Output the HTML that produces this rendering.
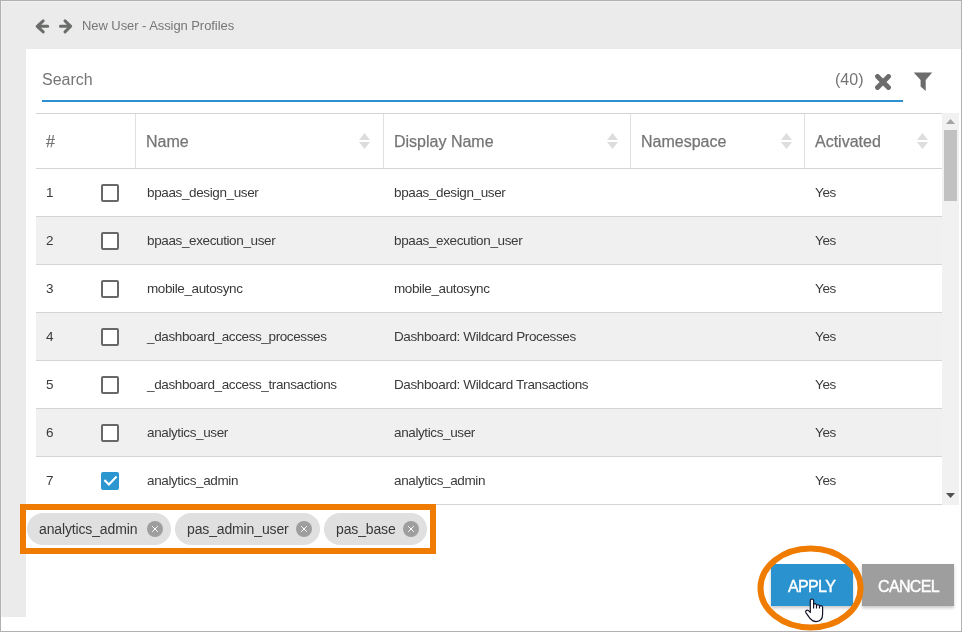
<!DOCTYPE html>
<html><head><meta charset="utf-8">
<style>
*{box-sizing:border-box;margin:0;padding:0}
html,body{width:962px;height:632px;overflow:hidden;background:#fff;font-family:"Liberation Sans",sans-serif}
.abs{position:absolute}
#frame{position:absolute;left:0;top:0;width:962px;height:632px;border:1px solid #b3b0b3;background:#fff}
#topbar{position:absolute;left:1px;top:1px;width:960px;height:48px;background:#ebebeb;border-top:1px solid #f1f1f1}
#leftbar{position:absolute;left:1px;top:1px;width:25px;height:616px;background:#ebebeb;border-left:1px solid #f1f1f1;border-top:1px solid #f1f1f1}
.txt{position:absolute;white-space:nowrap;line-height:1;will-change:transform}
#crumb{left:82px;top:19px;font-size:13px;color:#777;letter-spacing:-0.07px}
#search{left:42px;top:72px;font-size:16px;color:#757575}
#count{left:835px;top:72px;font-size:16px;color:#757575}
#uline{left:42px;top:100px;width:861px;height:2px;background:#2b8fd0}
#thead{left:36px;top:113px;width:906px;height:56px;border-top:1px solid #d4d4d4;border-bottom:1px solid #d4d4d4}
.vsep{position:absolute;top:114px;width:1px;height:54px;background:#e0e0e0}
.hd{-webkit-text-stroke:0.25px #757575;will-change:transform;position:absolute;top:134px;font-size:16px;color:#757575;line-height:1;white-space:nowrap}
.sort{position:absolute;top:133px;width:11px;height:16px}
.row{position:absolute;left:36px;width:906px;height:48px;border-bottom:1px solid #d4d4d4}
.row.alt{background:#f0f0f0}
.cell{will-change:transform;position:absolute;top:17px;font-size:13.5px;color:#3a3a3a;line-height:1;white-space:nowrap;letter-spacing:-0.38px}
.cb{position:absolute;left:65px;top:15px;width:18px;height:18px;border:2px solid #676967;border-radius:2px;background:#fff}
.cbon{position:absolute;left:65px;top:15px;width:18px;height:18px}
#track{left:942px;top:113px;width:17px;height:392px;background:#f1f1f1}
#thumb{left:944px;top:130px;width:13px;height:71px;background:#c1c1c1}
#orange{left:20px;top:504px;width:416px;height:50px;border:6px solid #ef7c00}
.chip{position:absolute;top:513px;height:32px;border-radius:16px;background:#e0e0e0}
.chip span{will-change:transform;position:absolute;left:11.5px;top:9px;font-size:14px;color:#383838;line-height:1;white-space:nowrap;letter-spacing:-0.14px}
.chip svg{position:absolute;top:8px;width:16px;height:16px}
.btn{position:absolute;top:564px;height:42px;color:#fff;font-size:16px;box-shadow:0 2px 3px rgba(0,0,0,.22)}
.btn span{-webkit-text-stroke:0.4px #fff;will-change:transform;position:absolute;top:15px;line-height:1;white-space:nowrap;letter-spacing:-0.65px}
</style></head><body>
<div id="frame"></div>
<div id="topbar"></div>
<div id="leftbar"></div>

<svg class="abs" style="left:30px;top:14.5px" width="50" height="22" viewBox="0 0 50 22"><path d="M13.2 5.9 L7.2 11.3 L13.2 16.9 M8 11.3 H17.7 M35 5.9 L40.7 11.3 L35 16.9 M40 11.3 H30.4" fill="none" stroke="#6b6d6b" stroke-width="3" stroke-linecap="round" stroke-linejoin="round"/></svg>
<div id="crumb" class="txt">New User - Assign Profiles</div>

<div id="search" class="txt">Search</div>
<div id="count" class="txt">(40)</div>
<div id="uline" class="abs"></div>
<svg class="abs" style="left:875px;top:74px" width="16" height="16" viewBox="0 0 16 16"><path d="M2.5 2.5 L13.5 13.5 M13.5 2.5 L2.5 13.5" stroke="#6b6c6b" stroke-width="4.9" stroke-linecap="round"/></svg>
<svg class="abs" style="left:913px;top:72px" width="20" height="20" viewBox="0 0 20 20"><path d="M0.7 0.5 H19.2 L12.7 7.9 V19 L7.6 14.6 V7.9 Z" fill="#6b6c6b"/></svg>

<div id="thead" class="abs"></div>
<div class="vsep" style="left:135px"></div>
<div class="vsep" style="left:383px"></div>
<div class="vsep" style="left:630px"></div>
<div class="vsep" style="left:804px"></div>
<div class="hd" style="left:46px">#</div>
<div class="hd" style="left:146px">Name</div>
<div class="hd" style="left:394px">Display Name</div>
<div class="hd" style="left:641px">Namespace</div>
<div class="hd" style="left:815px">Activated</div>
<svg class="sort" style="left:359px" viewBox="0 0 11 16"><path d="M5.5 0 L11 7 H0Z M0 9 H11 L5.5 16Z" fill="#ddd"/></svg>
<svg class="sort" style="left:607px" viewBox="0 0 11 16"><path d="M5.5 0 L11 7 H0Z M0 9 H11 L5.5 16Z" fill="#ddd"/></svg>
<svg class="sort" style="left:781px" viewBox="0 0 11 16"><path d="M5.5 0 L11 7 H0Z M0 9 H11 L5.5 16Z" fill="#ddd"/></svg>
<svg class="sort" style="left:917px" viewBox="0 0 11 16"><path d="M5.5 0 L11 7 H0Z M0 9 H11 L5.5 16Z" fill="#ddd"/></svg>

<div class="row" style="top:169px"><div class="cell" style="left:10px">1</div><div class="cb"></div><div class="cell" style="left:111px">bpaas_design_user</div><div class="cell" style="left:358px">bpaas_design_user</div><div class="cell" style="left:779px">Yes</div></div>
<div class="row alt" style="top:217px"><div class="cell" style="left:10px">2</div><div class="cb"></div><div class="cell" style="left:111px">bpaas_execution_user</div><div class="cell" style="left:358px">bpaas_execution_user</div><div class="cell" style="left:779px">Yes</div></div>
<div class="row" style="top:265px"><div class="cell" style="left:10px">3</div><div class="cb"></div><div class="cell" style="left:111px">mobile_autosync</div><div class="cell" style="left:358px">mobile_autosync</div><div class="cell" style="left:779px">Yes</div></div>
<div class="row alt" style="top:313px"><div class="cell" style="left:10px">4</div><div class="cb"></div><div class="cell" style="left:111px">_dashboard_access_processes</div><div class="cell" style="left:358px">Dashboard: Wildcard Processes</div><div class="cell" style="left:779px">Yes</div></div>
<div class="row" style="top:361px"><div class="cell" style="left:10px">5</div><div class="cb"></div><div class="cell" style="left:111px">_dashboard_access_transactions</div><div class="cell" style="left:358px">Dashboard: Wildcard Transactions</div><div class="cell" style="left:779px">Yes</div></div>
<div class="row alt" style="top:409px"><div class="cell" style="left:10px">6</div><div class="cb"></div><div class="cell" style="left:111px">analytics_user</div><div class="cell" style="left:358px">analytics_user</div><div class="cell" style="left:779px">Yes</div></div>
<div class="row" style="top:457px"><div class="cell" style="left:10px">7</div><svg class="cbon" viewBox="0 0 18 18"><rect x="0" y="0" width="18" height="18" rx="2" fill="#2b96d0"/><path d="M3.4 8.1 L7.9 12.5 L15.6 4.5" fill="none" stroke="#fff" stroke-width="2.1"/></svg><div class="cell" style="left:111px">analytics_admin</div><div class="cell" style="left:358px">analytics_admin</div><div class="cell" style="left:779px">Yes</div></div>

<div id="track" class="abs"></div>
<div id="thumb" class="abs"></div>
<svg class="abs" style="left:946px;top:119px" width="9" height="6" viewBox="0 0 9 6"><path d="M4.5 0 L9 5 H0Z" fill="#a3a3a3"/></svg>
<svg class="abs" style="left:946px;top:493px" width="9" height="6" viewBox="0 0 9 6"><path d="M0 0 H9 L4.5 5Z" fill="#505050"/></svg>

<div id="orange" class="abs"></div>
<div class="chip" style="left:27px;width:144px"><span>analytics_admin</span><svg style="left:120px" viewBox="0 0 16 16"><circle cx="8" cy="8" r="8" fill="#9e9e9e"/><path d="M5.2 5.2 L10.8 10.8 M10.8 5.2 L5.2 10.8" stroke="#fff" stroke-width="1"/></svg></div>
<div class="chip" style="left:175px;width:145px"><span>pas_admin_user</span><svg style="left:121px" viewBox="0 0 16 16"><circle cx="8" cy="8" r="8" fill="#9e9e9e"/><path d="M5.2 5.2 L10.8 10.8 M10.8 5.2 L5.2 10.8" stroke="#fff" stroke-width="1"/></svg></div>
<div class="chip" style="left:324px;width:103px"><span>pas_base</span><svg style="left:79px" viewBox="0 0 16 16"><circle cx="8" cy="8" r="8" fill="#9e9e9e"/><path d="M5.2 5.2 L10.8 10.8 M10.8 5.2 L5.2 10.8" stroke="#fff" stroke-width="1"/></svg></div>

<div class="btn" style="left:771px;width:82px;background:#2a93cf"><span style="left:17px">APPLY</span></div>
<div class="btn" style="left:862px;width:92px;background:#9e9e9e"><span style="left:16px">CANCEL</span></div>
<svg class="abs" style="left:750px;top:540px" width="120" height="92" viewBox="0 0 120 92"><ellipse cx="60.5" cy="48" rx="50" ry="39.5" fill="none" stroke="#ef7c00" stroke-width="6"/></svg>
<svg class="abs" style="left:805px;top:598px" width="19" height="25" viewBox="0 0 19 25"><path d="M5.3 14.5 V2.2 Q6.9 -0.2 8.6 2.2 V6.6 Q10 4.6 11.5 6.8 V7.6 Q13 5.8 14.5 7.8 V8.4 Q16.1 6.8 17.6 8.8 V16 Q17.6 23.4 11 23.6 Q7.4 23.6 4.8 20.2 L1 14.8 Q0 12.6 2.2 12.2 Q3.6 12.1 5.3 14.5 Z M8.6 6.6 V10.6 M11.5 7.6 V10.6 M14.5 8.4 V10.6" fill="#fff" stroke="#141428" stroke-width="1.2" stroke-linejoin="round"/></svg>
</body></html>
